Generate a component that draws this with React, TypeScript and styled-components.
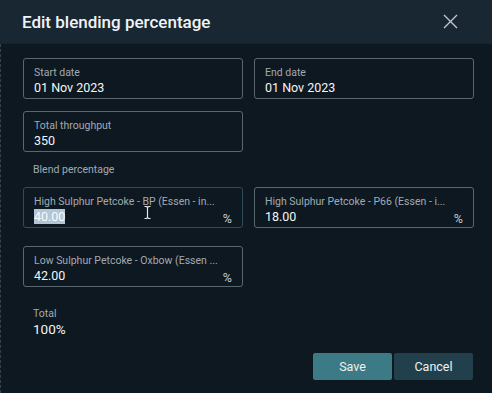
import React from "react";
import styled, { createGlobalStyle } from "styled-components";

const Global = createGlobalStyle`
  html, body {
    margin: 0;
    padding: 0;
    background: #0e1820;
  }
  body {
    font-family: Roboto, "Liberation Sans", sans-serif;
  }
`;

const Dialog = styled.div`
  width: 492px;
  height: 393px;
  background: #0e1820;
  display: flex;
  flex-direction: column;
  overflow: hidden;
`;

const Header = styled.div`
  height: 43px;
  flex-shrink: 0;
  background: #192733;
  border-bottom: 1px solid #16222c;
  display: flex;
  align-items: center;
  justify-content: space-between;
  padding: 0 34px 0 22px;
`;

const Title = styled.h2`
  margin: 0;
  font-size: 17px;
  font-weight: 500;
  color: #f1f4f6;
  padding-top: 1px;
`;

const CloseButton = styled.button`
  border: none;
  background: none;
  padding: 0;
  width: 15px;
  height: 15px;
  display: flex;
  color: #c3cad1;
`;

const Body = styled.div`
  flex: 1;
  display: flex;
  flex-direction: column;
  padding: 14px 19px 0 22px;
  border-left: 1px dashed #36424c;
`;

const Grid = styled.div<{ $rowGap: number }>`
  display: grid;
  grid-template-columns: 220px 220px;
  column-gap: 11px;
  row-gap: ${(p) => p.$rowGap}px;
`;

const Field = styled.div<{ $focused?: boolean }>`
  height: 41px;
  box-sizing: border-box;
  border: 1px solid ${(p) => (p.$focused ? "#2d4d5c" : "#5a6670")};
  border-radius: 3px;
  padding: 7px 10px 0 10px;
  display: flex;
  flex-direction: column;
  position: relative;
`;

const FieldLabel = styled.div`
  font-size: 10.5px;
  line-height: 14px;
  color: #a1aab2;
  white-space: nowrap;
`;

const ValueRow = styled.div`
  display: flex;
  align-items: flex-end;
  justify-content: space-between;
`;

const FieldValue = styled.div`
  font-size: 12.5px;
  line-height: 16px;
  color: #f3f5f7;
`;

const Selected = styled.span`
  background: #b2c6d6;
  color: #f7fafc;
`;

const Percent = styled.span`
  font-size: 12.5px;
  color: #c4cbd1;
  line-height: 16px;
  margin-bottom: -2px;
`;

const SectionLabel = styled.div`
  font-size: 10.5px;
  color: #a1aab2;
  padding: 11px 0 11px 10px;
`;

const Total = styled.div`
  padding: 20px 0 0 10px;
  display: flex;
  flex-direction: column;
  gap: 1px;
`;

const TotalLabel = styled.div`
  font-size: 10.5px;
  color: #a1aab2;
`;

const TotalValue = styled.div`
  font-size: 13.5px;
  color: #f3f5f7;
`;

const Footer = styled.div`
  display: flex;
  justify-content: flex-end;
  gap: 2px;
  margin-top: 16px;
`;

const Button = styled.button<{ $primary?: boolean }>`
  width: 79px;
  height: 27px;
  border: none;
  border-radius: 2px;
  background: ${(p) => (p.$primary ? "#3c7a85" : "#22404b")};
  color: #eef2f4;
  font-family: Roboto, "Liberation Sans", sans-serif;
  font-size: 12.5px;
`;

const Cursor = styled.svg`
  position: absolute;
  left: 119px;
  top: 17px;
`;

const App = () => {
  return (
    <Dialog>
      <Global />
      <Header>
        <Title>Edit blending percentage</Title>
        <CloseButton>
          <svg width="15" height="15" viewBox="0 0 15 15">
            <path d="M1 1L14 14M14 1L1 14" stroke="currentColor" strokeWidth="1.3" />
          </svg>
        </CloseButton>
      </Header>
      <Body>
        <Grid $rowGap={12}>
          <Field>
            <FieldLabel>Start date</FieldLabel>
            <FieldValue>01 Nov 2023</FieldValue>
          </Field>
          <Field>
            <FieldLabel>End date</FieldLabel>
            <FieldValue>01 Nov 2023</FieldValue>
          </Field>
          <Field>
            <FieldLabel>Total throughput</FieldLabel>
            <FieldValue>350</FieldValue>
          </Field>
        </Grid>
        <SectionLabel>Blend percentage</SectionLabel>
        <Grid $rowGap={18}>
          <Field $focused>
            <FieldLabel>High Sulphur Petcoke - BP (Essen - in...</FieldLabel>
            <ValueRow>
              <FieldValue>
                <Selected>40.00</Selected>
              </FieldValue>
              <Percent>%</Percent>
            </ValueRow>
            <Cursor width="9" height="15" viewBox="0 0 9 15">
              <path
                d="M1.5 1.5H3.5L4.5 2.5L5.5 1.5H7.5M4.5 2.5V12.5M1.5 13.5H3.5L4.5 12.5L5.5 13.5H7.5"
                stroke="#0e1820"
                strokeWidth="2.6"
                fill="none"
              />
              <path
                d="M1.5 1.5H3.5L4.5 2.5L5.5 1.5H7.5M4.5 2.5V12.5M1.5 13.5H3.5L4.5 12.5L5.5 13.5H7.5"
                stroke="#e6e9ec"
                strokeWidth="1.2"
                fill="none"
              />
            </Cursor>
          </Field>
          <Field>
            <FieldLabel>High Sulphur Petcoke - P66 (Essen - i...</FieldLabel>
            <ValueRow>
              <FieldValue>18.00</FieldValue>
              <Percent>%</Percent>
            </ValueRow>
          </Field>
          <Field>
            <FieldLabel>Low Sulphur Petcoke - Oxbow (Essen ...</FieldLabel>
            <ValueRow>
              <FieldValue>42.00</FieldValue>
              <Percent>%</Percent>
            </ValueRow>
          </Field>
        </Grid>
        <Total>
          <TotalLabel>Total</TotalLabel>
          <TotalValue>100%</TotalValue>
        </Total>
        <Footer>
          <Button $primary>Save</Button>
          <Button>Cancel</Button>
        </Footer>
      </Body>
    </Dialog>
  );
};

export default App;
